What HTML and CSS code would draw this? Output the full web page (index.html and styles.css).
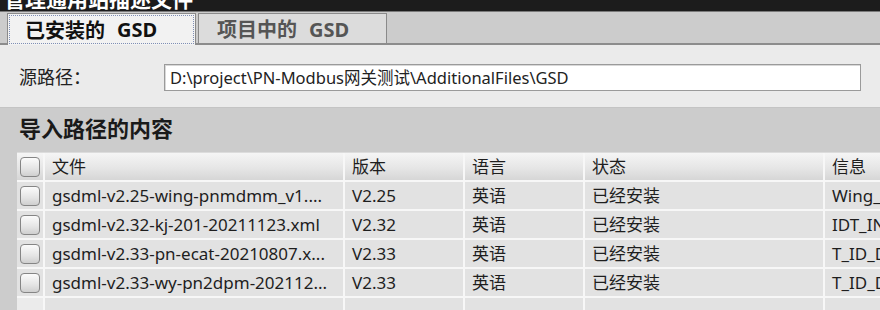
FILE: index.html
```html
<!DOCTYPE html>
<html lang="zh">
<head>
<meta charset="utf-8">
<link rel="stylesheet" href="styles.css">
</head>
<body>
<div class="titlebar"><span class="title-text">管理通用站描述文件</span></div>
<div class="tabstrip">
  <div class="tab active"><span class="focus">已安装的<span class="lat">GSD</span></span></div>
  <div class="tab"><span class="plain">项目中的<span class="lat">GSD</span></span></div>
</div>
<div class="source">
  <span class="label">源路径：</span>
  <div class="input">D:\project\PN-Modbus网关测试\AdditionalFiles\GSD</div>
</div>
<div class="section">
  <div class="heading">导入路径的内容</div>
  <div class="table">
    <div class="th cb"><span class="box"></span></div>
    <div class="th">文件</div>
    <div class="th">版本</div>
    <div class="th">语言</div>
    <div class="th">状态</div>
    <div class="th">信息</div>

    <div class="td cb"><span class="box"></span></div>
    <div class="td">gsdml-v2.25-wing-pnmdmm_v1....</div>
    <div class="td">V2.25</div>
    <div class="td">英语</div>
    <div class="td">已经安装</div>
    <div class="td">Wing_</div>

    <div class="td cb"><span class="box"></span></div>
    <div class="td">gsdml-v2.32-kj-201-20211123.xml</div>
    <div class="td">V2.32</div>
    <div class="td">英语</div>
    <div class="td">已经安装</div>
    <div class="td">IDT_IN</div>

    <div class="td cb"><span class="box"></span></div>
    <div class="td">gsdml-v2.33-pn-ecat-20210807.x...</div>
    <div class="td">V2.33</div>
    <div class="td">英语</div>
    <div class="td">已经安装</div>
    <div class="td">T_ID_D</div>

    <div class="td cb"><span class="box"></span></div>
    <div class="td">gsdml-v2.33-wy-pn2dpm-202112...</div>
    <div class="td">V2.33</div>
    <div class="td">英语</div>
    <div class="td">已经安装</div>
    <div class="td">T_ID_D</div>

    <div class="td cb empty"></div>
    <div class="td"></div>
    <div class="td"></div>
    <div class="td"></div>
    <div class="td"></div>
    <div class="td"></div>
  </div>
</div>
</body>
</html>
```
FILE: styles.css
```css
html, body {
  margin: 0;
  padding: 0;
  width: 880px;
  height: 310px;
  overflow: hidden;
  background: #cccccc;
  font-family: "Noto Sans", "Noto Sans CJK SC", sans-serif;
  color: #1e1e1e;
}

.titlebar {
  height: 11px;
  background: #1c1c1c;
  overflow: hidden;
  padding-left: 4px;
}
.title-text {
  display: block;
  color: #ffffff;
  font-weight: bold;
  font-size: 21px;
  line-height: 21px;
  margin-top: -12px;
  font-family: "Noto Sans CJK SC", sans-serif;
}

.tabstrip {
  height: 31px;
  background: #cccccc;
  border-top: 1px solid #7a7a7a;
  border-bottom: 2px solid #8c8c8c;
  display: flex;
  align-items: flex-end;
  padding-left: 7px;
  gap: 2px;
}
.tab {
  height: 30px;
  width: 189px;
  box-sizing: border-box;
  border: 1px solid #8a8a8a;
  border-bottom: none;
  background: #dcdcdc;
  color: #555555;
  font-weight: bold;
  font-size: 20px;
  display: flex;
  align-items: center;
  justify-content: flex-start;
  font-family: "Noto Sans CJK SC", sans-serif;
}
.tab.active {
  background: #f2f2f2;
  color: #111111;
  height: 32px;
  margin-bottom: -2px;
  padding: 1px;
}
.tab.active .focus {
  flex: 1;
  align-self: stretch;
  border: 1px dotted #7f8fb5;
  display: flex;
  align-items: center;
  padding-left: 15px;
}
.tab .plain {
  padding-left: 18px;
}
.tab .lat {
  font-family: "Noto Sans", sans-serif;
  margin-left: 12px;
}

.source {
  height: 63px;
  background: #ebebeb;
  border-bottom: 1px solid #c4c4c4;
  display: flex;
  align-items: center;
  padding-left: 19px;
  box-sizing: border-box;
}
.label {
  width: 145px;
  font-size: 18px;
  color: #222;
}
.input {
  width: 697px;
  height: 27px;
  box-sizing: border-box;
  background: #ffffff;
  border: 1px solid #9a9a9a;
  box-shadow: inset 1px 1px 0 #d8d8d8;
  font-size: 16.5px;
  line-height: 25px;
  padding-left: 5px;
  color: #222;
  margin-top: 2px;
}

.section {
  background: #cccccc;
  padding-top: 4px;
}
.heading {
  font-size: 22px;
  font-weight: bold;
  padding-left: 19px;
  height: 40px;
  line-height: 30px;
  color: #1a1a1a;
  font-family: "Noto Sans CJK SC", sans-serif;
}

.table {
  margin-left: 17px;
  display: grid;
  grid-template-columns: 26px 298px 118px 118px 238px 200px;
  grid-auto-rows: 27px;
  grid-template-rows: 27px;
  column-gap: 2px;
  row-gap: 2px;
  background: #f7f7f7;
  border-top: 1px solid #dcdcdc;
  width: 1100px;
}
.th {
  background: linear-gradient(#f5f5f5, #e6e6e6 55%, #d6d6d6);
  font-size: 17px;
  line-height: 27px;
  padding-left: 7px;
  white-space: nowrap;
  overflow: hidden;
}
.td {
  background: #e2e2e2;
  font-size: 17px;
  line-height: 27px;
  padding-left: 7px;
  white-space: nowrap;
  overflow: hidden;
}
.th.cb, .td.cb {
  padding-left: 3px;
  display: flex;
  align-items: center;
}
.td.cb.empty {
  background: #ebebeb;
}
.box {
  width: 20px;
  height: 20px;
  box-sizing: border-box;
  border: 1px solid #858585;
  border-radius: 4px;
  background: linear-gradient(#fbfbfb, #e4e4e4 60%, #cfcfcf);
}
```
